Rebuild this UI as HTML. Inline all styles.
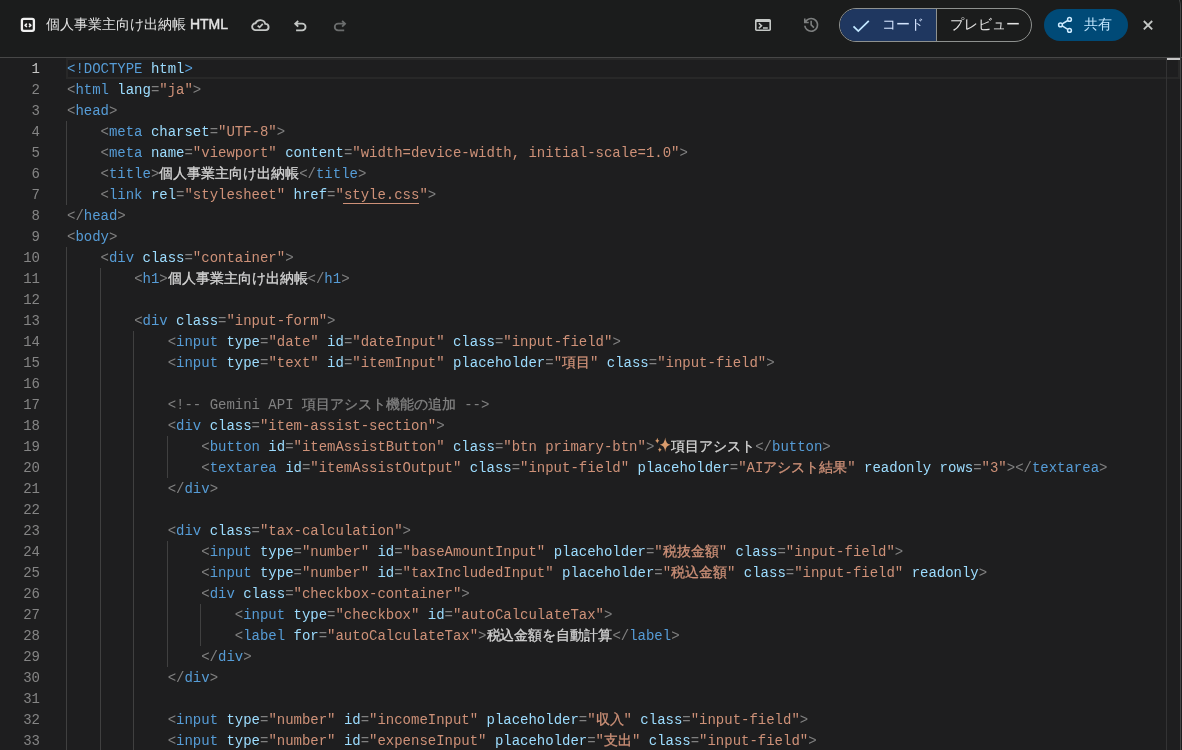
<!DOCTYPE html>
<html><head><meta charset="utf-8">
<style>
html,body{margin:0;padding:0;width:1182px;height:750px;overflow:hidden;background:#1e1e1f;}
body{position:relative;will-change:transform;font-family:"Liberation Sans",sans-serif;}
#top{position:absolute;left:0;top:0;width:1182px;height:57px;background:#1b1c1c;}
#sep{position:absolute;left:0;top:57px;width:1182px;height:1px;background:#474747;}
#ed{position:absolute;left:0;top:58px;width:1182px;height:692px;background:#1e1e1f;}
.ln{position:absolute;left:0;width:40px;text-align:right;height:21px;line-height:23px;font-family:"Liberation Mono",monospace;font-size:14px;color:#858585;}
.ln.act{color:#c6c6c6}
.cl{position:absolute;left:67px;height:21px;line-height:23px;font-family:"Liberation Mono",monospace;font-size:14px;letter-spacing:-0.012px;white-space:pre;color:#d4d4d4;}
.b{color:#808080}.t{color:#569cd6}.a{color:#9cdcfe}.s{color:#ce9178}.x{color:#d4d4d4}.c{color:#808080}
.j{-webkit-text-stroke:0.3px currentColor;}
.sp{display:inline-block;width:17px;height:1px;}
#ul{position:absolute;left:343px;top:203px;width:76px;height:1px;background:#ce9178;}
.g{position:absolute;width:1px;background:#404040;}
#cur{position:absolute;left:66px;top:58px;width:1110px;height:17px;border:2px solid #282828;}
#ruler{position:absolute;left:1166px;top:58px;width:1px;height:692px;background:#333334;}
#thumb{position:absolute;left:1167px;top:58px;width:13px;height:2px;background:#c6c6c6;}
#rb{position:absolute;left:1100px;top:-10px;width:80px;height:800px;border-right:1px solid #464747;border-top-right-radius:16px;box-sizing:content-box;}
.title{position:absolute;left:46px;top:16.2px;font-size:14px;line-height:17px;color:#e3e3e3;white-space:nowrap;}
.title b{font-weight:normal;-webkit-text-stroke:0.45px #e3e3e3;color:#e3e3e3}
svg{position:absolute;left:0;top:0;overflow:visible}
.seg{position:absolute;left:839px;top:8px;width:191px;height:32px;border:1px solid #8e918f;border-radius:17px;overflow:hidden;}
.seg .l{position:absolute;left:0;top:0;width:96px;height:32px;background:#1f3760;border-right:1px solid #8e918f;}
.lbl{position:absolute;font-size:14px;line-height:17px;white-space:nowrap;}
.share{position:absolute;left:1044px;top:9px;width:84px;height:32px;border-radius:16px;background:#004a77;}
</style></head><body>
<div id="top"></div>
<div id="sep"></div>
<div id="ed"></div>
<div id="cur"></div>
<div class="g" style="left:66.0px;top:121px;height:84px"></div>
<div class="g" style="left:66.0px;top:247px;height:504px"></div>
<div class="g" style="left:100.0px;top:268px;height:483px"></div>
<div class="g" style="left:133.0px;top:331px;height:420px"></div>
<div class="g" style="left:167.0px;top:436px;height:42px"></div>
<div class="g" style="left:167.0px;top:541px;height:126px"></div>
<div class="g" style="left:200.0px;top:604px;height:42px"></div>
<div class="ln act" style="top:58px">1</div><div class="cl" style="top:58px"><span class="t">&lt;!DOCTYPE</span> <span class="a">html</span><span class="t">&gt;</span></div>
<div class="ln" style="top:79px">2</div><div class="cl" style="top:79px"><span class="b">&lt;</span><span class="t">html</span> <span class="a">lang</span><span class="b">=</span><span class="s">&quot;ja&quot;</span><span class="b">&gt;</span></div>
<div class="ln" style="top:100px">3</div><div class="cl" style="top:100px"><span class="b">&lt;</span><span class="t">head</span><span class="b">&gt;</span></div>
<div class="ln" style="top:121px">4</div><div class="cl" style="top:121px">    <span class="b">&lt;</span><span class="t">meta</span> <span class="a">charset</span><span class="b">=</span><span class="s">&quot;UTF-8&quot;</span><span class="b">&gt;</span></div>
<div class="ln" style="top:142px">5</div><div class="cl" style="top:142px">    <span class="b">&lt;</span><span class="t">meta</span> <span class="a">name</span><span class="b">=</span><span class="s">&quot;viewport&quot;</span> <span class="a">content</span><span class="b">=</span><span class="s">&quot;width=device-width, initial-scale=1.0&quot;</span><span class="b">&gt;</span></div>
<div class="ln" style="top:163px">6</div><div class="cl" style="top:163px">    <span class="b">&lt;</span><span class="t">title</span><span class="b">&gt;</span><span class="x"><span class="j">個人事業主向け出納帳</span></span><span class="b">&lt;/</span><span class="t">title</span><span class="b">&gt;</span></div>
<div class="ln" style="top:184px">7</div><div class="cl" style="top:184px">    <span class="b">&lt;</span><span class="t">link</span> <span class="a">rel</span><span class="b">=</span><span class="s">&quot;stylesheet&quot;</span> <span class="a">href</span><span class="b">=</span><span class="s">"style.css"</span><span class="b">&gt;</span></div>
<div class="ln" style="top:205px">8</div><div class="cl" style="top:205px"><span class="b">&lt;/</span><span class="t">head</span><span class="b">&gt;</span></div>
<div class="ln" style="top:226px">9</div><div class="cl" style="top:226px"><span class="b">&lt;</span><span class="t">body</span><span class="b">&gt;</span></div>
<div class="ln" style="top:247px">10</div><div class="cl" style="top:247px">    <span class="b">&lt;</span><span class="t">div</span> <span class="a">class</span><span class="b">=</span><span class="s">&quot;container&quot;</span><span class="b">&gt;</span></div>
<div class="ln" style="top:268px">11</div><div class="cl" style="top:268px">        <span class="b">&lt;</span><span class="t">h1</span><span class="b">&gt;</span><span class="x"><span class="j">個人事業主向け出納帳</span></span><span class="b">&lt;/</span><span class="t">h1</span><span class="b">&gt;</span></div>
<div class="ln" style="top:289px">12</div><div class="cl" style="top:289px"></div>
<div class="ln" style="top:310px">13</div><div class="cl" style="top:310px">        <span class="b">&lt;</span><span class="t">div</span> <span class="a">class</span><span class="b">=</span><span class="s">&quot;input-form&quot;</span><span class="b">&gt;</span></div>
<div class="ln" style="top:331px">14</div><div class="cl" style="top:331px">            <span class="b">&lt;</span><span class="t">input</span> <span class="a">type</span><span class="b">=</span><span class="s">&quot;date&quot;</span> <span class="a">id</span><span class="b">=</span><span class="s">&quot;dateInput&quot;</span> <span class="a">class</span><span class="b">=</span><span class="s">&quot;input-field&quot;</span><span class="b">&gt;</span></div>
<div class="ln" style="top:352px">15</div><div class="cl" style="top:352px">            <span class="b">&lt;</span><span class="t">input</span> <span class="a">type</span><span class="b">=</span><span class="s">&quot;text&quot;</span> <span class="a">id</span><span class="b">=</span><span class="s">&quot;itemInput&quot;</span> <span class="a">placeholder</span><span class="b">=</span><span class="s">&quot;<span class="j">項目</span>&quot;</span> <span class="a">class</span><span class="b">=</span><span class="s">&quot;input-field&quot;</span><span class="b">&gt;</span></div>
<div class="ln" style="top:373px">16</div><div class="cl" style="top:373px"></div>
<div class="ln" style="top:394px">17</div><div class="cl" style="top:394px">            <span class="c">&lt;!-- Gemini API <span class="j">項目アシスト機能の追加</span> --&gt;</span></div>
<div class="ln" style="top:415px">18</div><div class="cl" style="top:415px">            <span class="b">&lt;</span><span class="t">div</span> <span class="a">class</span><span class="b">=</span><span class="s">&quot;item-assist-section&quot;</span><span class="b">&gt;</span></div>
<div class="ln" style="top:436px">19</div><div class="cl" style="top:436px">                <span class="b">&lt;</span><span class="t">button</span> <span class="a">id</span><span class="b">=</span><span class="s">&quot;itemAssistButton&quot;</span> <span class="a">class</span><span class="b">=</span><span class="s">&quot;btn primary-btn&quot;</span><span class="b">&gt;</span><span class="x"><span class="sp"></span><span class="j">項目アシスト</span></span><span class="b">&lt;/</span><span class="t">button</span><span class="b">&gt;</span></div>
<div class="ln" style="top:457px">20</div><div class="cl" style="top:457px">                <span class="b">&lt;</span><span class="t">textarea</span> <span class="a">id</span><span class="b">=</span><span class="s">&quot;itemAssistOutput&quot;</span> <span class="a">class</span><span class="b">=</span><span class="s">&quot;input-field&quot;</span> <span class="a">placeholder</span><span class="b">=</span><span class="s">&quot;AI<span class="j">アシスト結果</span>&quot;</span> <span class="a">readonly</span> <span class="a">rows</span><span class="b">=</span><span class="s">&quot;3&quot;</span><span class="b">&gt;</span><span class="b">&lt;/</span><span class="t">textarea</span><span class="b">&gt;</span></div>
<div class="ln" style="top:478px">21</div><div class="cl" style="top:478px">            <span class="b">&lt;/</span><span class="t">div</span><span class="b">&gt;</span></div>
<div class="ln" style="top:499px">22</div><div class="cl" style="top:499px"></div>
<div class="ln" style="top:520px">23</div><div class="cl" style="top:520px">            <span class="b">&lt;</span><span class="t">div</span> <span class="a">class</span><span class="b">=</span><span class="s">&quot;tax-calculation&quot;</span><span class="b">&gt;</span></div>
<div class="ln" style="top:541px">24</div><div class="cl" style="top:541px">                <span class="b">&lt;</span><span class="t">input</span> <span class="a">type</span><span class="b">=</span><span class="s">&quot;number&quot;</span> <span class="a">id</span><span class="b">=</span><span class="s">&quot;baseAmountInput&quot;</span> <span class="a">placeholder</span><span class="b">=</span><span class="s">&quot;<span class="j">税抜金額</span>&quot;</span> <span class="a">class</span><span class="b">=</span><span class="s">&quot;input-field&quot;</span><span class="b">&gt;</span></div>
<div class="ln" style="top:562px">25</div><div class="cl" style="top:562px">                <span class="b">&lt;</span><span class="t">input</span> <span class="a">type</span><span class="b">=</span><span class="s">&quot;number&quot;</span> <span class="a">id</span><span class="b">=</span><span class="s">&quot;taxIncludedInput&quot;</span> <span class="a">placeholder</span><span class="b">=</span><span class="s">&quot;<span class="j">税込金額</span>&quot;</span> <span class="a">class</span><span class="b">=</span><span class="s">&quot;input-field&quot;</span> <span class="a">readonly</span><span class="b">&gt;</span></div>
<div class="ln" style="top:583px">26</div><div class="cl" style="top:583px">                <span class="b">&lt;</span><span class="t">div</span> <span class="a">class</span><span class="b">=</span><span class="s">&quot;checkbox-container&quot;</span><span class="b">&gt;</span></div>
<div class="ln" style="top:604px">27</div><div class="cl" style="top:604px">                    <span class="b">&lt;</span><span class="t">input</span> <span class="a">type</span><span class="b">=</span><span class="s">&quot;checkbox&quot;</span> <span class="a">id</span><span class="b">=</span><span class="s">&quot;autoCalculateTax&quot;</span><span class="b">&gt;</span></div>
<div class="ln" style="top:625px">28</div><div class="cl" style="top:625px">                    <span class="b">&lt;</span><span class="t">label</span> <span class="a">for</span><span class="b">=</span><span class="s">&quot;autoCalculateTax&quot;</span><span class="b">&gt;</span><span class="x"><span class="j">税込金額を自動計算</span></span><span class="b">&lt;/</span><span class="t">label</span><span class="b">&gt;</span></div>
<div class="ln" style="top:646px">29</div><div class="cl" style="top:646px">                <span class="b">&lt;/</span><span class="t">div</span><span class="b">&gt;</span></div>
<div class="ln" style="top:667px">30</div><div class="cl" style="top:667px">            <span class="b">&lt;/</span><span class="t">div</span><span class="b">&gt;</span></div>
<div class="ln" style="top:688px">31</div><div class="cl" style="top:688px"></div>
<div class="ln" style="top:709px">32</div><div class="cl" style="top:709px">            <span class="b">&lt;</span><span class="t">input</span> <span class="a">type</span><span class="b">=</span><span class="s">&quot;number&quot;</span> <span class="a">id</span><span class="b">=</span><span class="s">&quot;incomeInput&quot;</span> <span class="a">placeholder</span><span class="b">=</span><span class="s">&quot;<span class="j">収入</span>&quot;</span> <span class="a">class</span><span class="b">=</span><span class="s">&quot;input-field&quot;</span><span class="b">&gt;</span></div>
<div class="ln" style="top:730px">33</div><div class="cl" style="top:730px">            <span class="b">&lt;</span><span class="t">input</span> <span class="a">type</span><span class="b">=</span><span class="s">&quot;number&quot;</span> <span class="a">id</span><span class="b">=</span><span class="s">&quot;expenseInput&quot;</span> <span class="a">placeholder</span><span class="b">=</span><span class="s">&quot;<span class="j">支出</span>&quot;</span> <span class="a">class</span><span class="b">=</span><span class="s">&quot;input-field&quot;</span><span class="b">&gt;</span></div>
<div id="ul"></div>
<svg width="1182" height="750" viewBox="0 0 1182 750" style="width:1182px;height:750px">
 <g fill="#d99b6c">
  <path d="M665.2 437.6 Q665.7 444.3 670.6 444.8 Q665.7 445.3 665.2 452 Q664.7 445.3 659.8 444.8 Q664.7 444.3 665.2 437.6Z"/>
  <path d="M657.3 437.8 Q657.6 440.4 659.4 440.7 Q657.6 441 657.3 443.6 Q657 441 655.2 440.7 Q657 440.4 657.3 437.8Z"/>
  <path d="M659.8 447.3 Q660.1 449.5 661.7 449.8 Q660.1 450.1 659.8 452.3 Q659.5 450.1 657.9 449.8 Q659.5 449.5 659.8 447.3Z"/>
 </g>
</svg>
<div id="ruler"></div>
<div id="thumb"></div>
<div id="rb"></div>

<div class="title">個人事業主向け出納帳 <b>HTML</b></div>
<div class="seg"><div class="l"></div></div>
<div class="lbl" style="left:882px;top:15.7px;color:#d3e3fd">コード</div>
<div class="lbl" style="left:950px;top:15.5px;color:#e3e3e3">プレビュー</div>
<div class="share"></div>
<div class="lbl" style="left:1084px;top:16px;color:#c2e7ff">共有</div>

<svg width="1182" height="57" viewBox="0 0 1182 57">
 <!-- code icon -->
 <rect x="21.9" y="18.8" width="12" height="12.1" rx="1.8" fill="none" stroke="#f0f0f0" stroke-width="2.3"/>
 <path d="M26.4 24.1 L25.1 25.3 L26.4 26.5 M29.5 24.1 L30.8 25.3 L29.5 26.5" fill="none" stroke="#f0f0f0" stroke-width="1.7" stroke-linecap="round" stroke-linejoin="round"/>
 <!-- cloud done -->
 <path d="M255.6 30.1 H265.6 A3.1 3.1 0 0 0 265.3 23.9 A5.2 5.2 0 0 0 255.5 23.3 A3.4 3.4 0 0 0 255.6 30.1 Z" fill="none" stroke="#c4c7c5" stroke-width="1.9" stroke-linejoin="round"/>
 <path d="M257.7 25.6 L259.6 27.4 L262.8 23.9" fill="none" stroke="#c4c7c5" stroke-width="1.7"/>
 <!-- undo -->
 <path d="M298.2 20.8 L295.2 23.7 L298.2 26.6 M295.2 23.7 H302.2 A3.35 3.35 0 0 1 302.2 30.4 H296.1" fill="none" stroke="#c4c7c5" stroke-width="1.8" stroke-linejoin="miter"/>
 <!-- redo -->
 <path d="M342.1 20.8 L345.1 23.7 L342.1 26.6 M345.1 23.7 H338.1 A3.35 3.35 0 0 0 338.1 30.4 H344.2" fill="none" stroke="#6b6d6d" stroke-width="1.8" stroke-linejoin="miter"/>
 <!-- terminal -->
 <g transform="translate(753.4 33.95) scale(0.02 0.01875)"><path fill="#c4c7c5" d="M160-160q-33 0-56.5-23.5T80-240v-480q0-33 23.5-56.5T160-800h640q33 0 56.5 23.5T880-720v480q0 33-23.5 56.5T800-160H160Zm0-80h640v-400H160v400Zm140-40-56-56 103-104-104-104 57-56 160 160-160 160Zm180 0v-80h240v80H480Z"/></g>
 <!-- history -->
 <g transform="translate(801.6 34.4) scale(0.0199)"><path fill="#7c7e7e" d="M480-120q-138 0-240.5-91.5T122-440h82q14 104 92.5 172T480-200q117 0 198.5-81.5T760-480q0-117-81.5-198.5T480-760q-69 0-129 32t-101 88h110v80H120v-240h80v94q51-64 124.5-99T480-840q75 0 140.5 28.5t114 77q48.5 48.5 77 114T840-480q0 75-28.5 140.5t-77 114q-48.5 48.5-114 77T480-120Zm112-192L440-464v-216h80v184l128 128-56 56Z"/></g>
 <!-- check -->
 <path d="M853.5 26.3 L858.3 31.1 L868.8 20.8" fill="none" stroke="#c2e7ff" stroke-width="1.8"/>
 <!-- share -->
 <g fill="none" stroke="#cdebff" stroke-width="1.5">
  <circle cx="1069.5" cy="19.4" r="1.9"/><circle cx="1060.5" cy="24.9" r="1.9"/><circle cx="1069.5" cy="30.4" r="1.9"/>
  <path d="M1062.2 23.9 L1067.8 20.5 M1062.2 25.9 L1067.8 29.3"/>
 </g>
 <!-- close -->
 <path d="M1143.8 21 L1152.2 29.4 M1152.2 21 L1143.8 29.4" fill="none" stroke="#c4c7c5" stroke-width="1.8"/>
</svg>
</body></html>
